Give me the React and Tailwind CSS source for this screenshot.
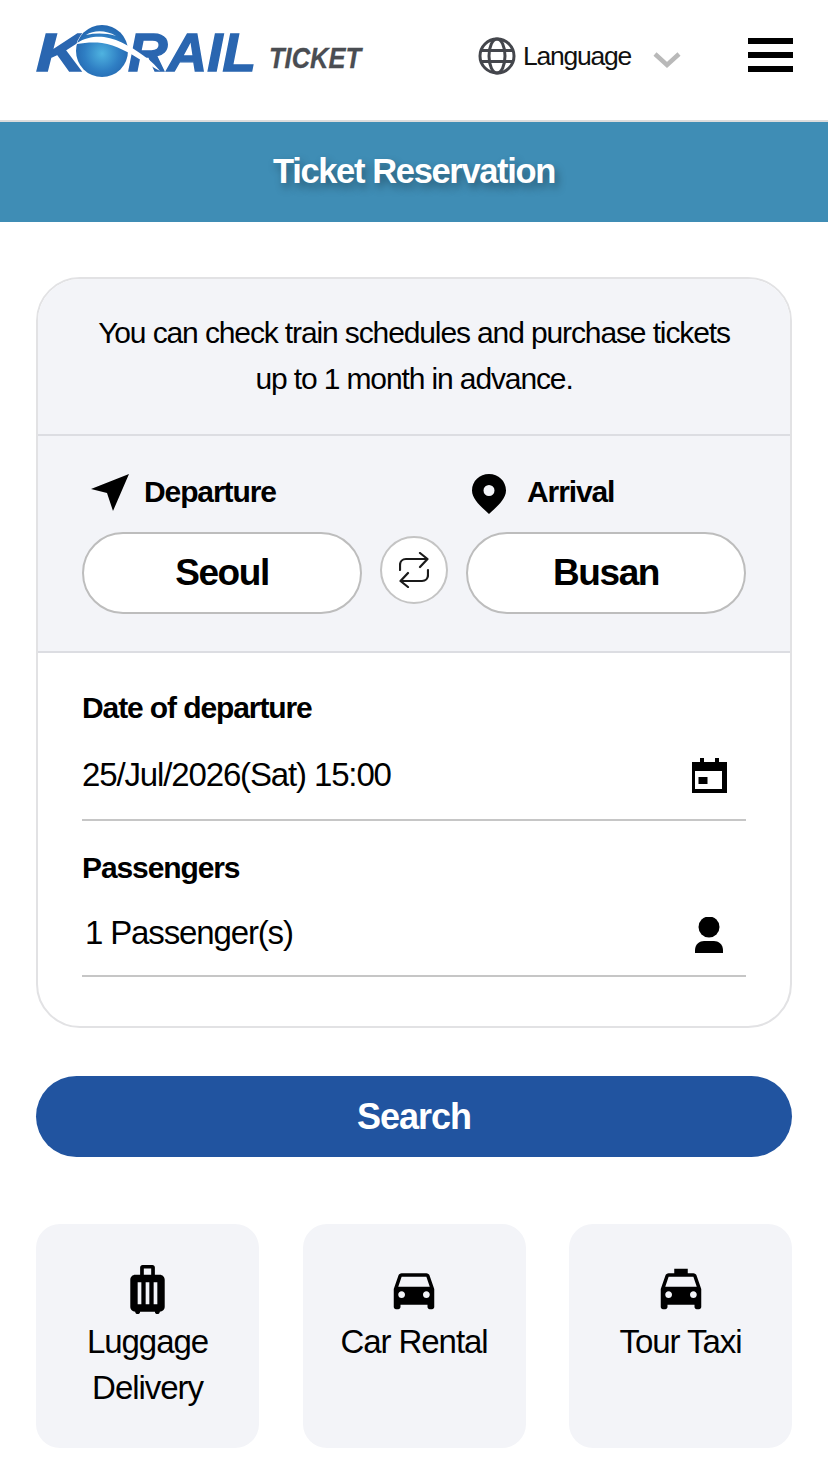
import React from "react";
import { MdLuggage, MdDirectionsCar, MdLocalTaxi } from "react-icons/md";

function Logo() {
  const f = "'Liberation Sans', sans-serif";
  return (
    <svg width="345" height="58" viewBox="0 0 345 58" className="shrink-0">
      <defs>
        <radialGradient id="glb" cx="0.5" cy="0.55" r="0.6">
          <stop offset="0" stopColor="#4fb3e0" />
          <stop offset="0.55" stopColor="#2f7fc4" />
          <stop offset="1" stopColor="#2161ab" />
        </radialGradient>
      </defs>
      <text x="0" y="47" fontFamily={f} fontWeight="700" fontStyle="italic" fontSize="53" fill="#2a66b0" stroke="#2a66b0" strokeWidth="1.4" textLength="50" lengthAdjust="spacingAndGlyphs">K</text>
      <text x="92" y="47" fontFamily={f} fontWeight="700" fontStyle="italic" fontSize="53" fill="#2a66b0" stroke="#2a66b0" strokeWidth="1.4" textLength="128" lengthAdjust="spacingAndGlyphs">RAIL</text>
      <circle cx="66" cy="27" r="26.5" fill="#ffffff" />
      <circle cx="66" cy="27" r="26" fill="url(#glb)" />
      <path d="M41 19 C50 13 60 12 68 13 C84 15 100 26 112 35 C116 38 120 42 124 47 C118 44 114 41 108 38 C94 29 80 21 66 19 C56 18 48 19 41 20 Z" fill="#ffffff" />
      <path d="M50 11 C58 6 70 6 80 12 C70 9 60 9 50 11 Z" fill="#ffffff" />
      <text x="233" y="44" fontFamily={f} fontWeight="700" fontStyle="italic" fontSize="30" fill="#4a4d52" stroke="#4a4d52" strokeWidth="0.3" textLength="92" lengthAdjust="spacingAndGlyphs">TICKET</text>
    </svg>
  );
}

function Globe() {
  return (
    <svg width="38" height="38" viewBox="0 0 38 38" fill="none" stroke="#44464c" strokeWidth="3">
      <circle cx="19" cy="19" r="17" />
      <ellipse cx="19" cy="19" rx="8" ry="17" />
      <path d="M4 13.5h30M4 24.5h30" />
    </svg>
  );
}

function Person() {
  return (
    <svg width="28" height="36" viewBox="0 0 28 36" fill="#000">
      <circle cx="14" cy="10" r="10.5" />
      <path d="M0 36v-3c0-6 5-9 9-9h10c4 0 9 3 9 9v3z" />
    </svg>
  );
}

function CalendarIcon() {
  return (
    <svg width="35" height="35" viewBox="0 0 35 35" fillRule="evenodd" fill="#000">
      <path d="M8 0h4v4h11V0h4v4h8v31H0V4h8zM3 13v18h27V13z" />
      <rect x="6.5" y="19" width="9" height="7" />
    </svg>
  );
}

function SwapIcon() {
  return (
    <svg width="30" height="36" viewBox="0 0 30 36" fill="none" stroke="#1a1a1a" strokeWidth="2.2" strokeLinecap="round" strokeLinejoin="round">
      <path d="M1 18v-5c0-3.5 2.5-6 6-6h21" />
      <path d="M21 1l7.5 6-7.5 8" />
      <path d="M29 18v5c0 3.500-2.500 6-6 6H2" />
      <path d="M9 21l-7.500 8 7.500 6" />
    </svg>
  );
}

function Field({ label, value, icon, vclass }) {
  return (
    <div className="flex flex-col">
      <div className="text-[30px] font-bold leading-[34px] tracking-[-1.1px]">{label}</div>
      <div className="flex items-center justify-between border-b-2 border-[#c6c6c6]">
        <span className={`text-[33px] tracking-[-1.14px] ${vclass}`}>{value}</span>
        {icon}
      </div>
    </div>
  );
}

function Tile({ icon, label }) {
  return (
    <div className="flex h-[224px] flex-col items-center rounded-[24px] bg-[#f3f4f8] pt-[35px] text-center">
      <div className="flex h-[60px] items-center justify-center">{icon}</div>
      <div className="w-full text-[33px] leading-[46px] tracking-[-1.05px]">{label}</div>
    </div>
  );
}

export default function App() {
  return (
    <div className="w-[828px] h-[1469px] overflow-hidden bg-white text-black font-['Liberation_Sans',Arial,sans-serif]">
      <header className="flex h-[122px] items-center border-b-2 border-[#dcdcdc] pl-[36px] pr-[35px]">
        <div className="flex items-center pb-[14px]">
          <Logo />
        </div>
        <div className="ml-[97px] flex items-center pb-[8px]">
          <Globe />
          <span className="ml-[7px] mt-[2px] text-[26.5px] tracking-[-1.25px] text-[#111]">Language</span>
          <svg width="28" height="18" viewBox="0 0 28 18" fill="none" stroke="#b9b9b9" strokeWidth="4.5" className="ml-[22px] mt-[8px]">
            <path d="M2 3l12 11L26 3" />
          </svg>
        </div>
        <div className="ml-auto flex h-[34px] w-[45px] flex-col justify-between mb-[10px]">
          <span className="h-[6px] bg-black" />
          <span className="h-[6px] bg-black" />
          <span className="h-[6px] bg-black" />
        </div>
      </header>

      <div className="flex h-[100px] items-center justify-center bg-[#3f8db5] text-[34.5px] font-bold tracking-[-1.35px] text-white [text-shadow:3px_5px_8px_rgba(0,0,0,0.35)]">
        Ticket Reservation
      </div>

      <main className="px-[36px] pt-[55px]">
        <section className="h-[751px] overflow-hidden rounded-[44px] border-2 border-[#e2e2e4]">
          <div className="flex h-[157px] flex-col justify-center border-b-2 border-[#dcdde2] bg-[#f3f4f8] pb-[1px] text-center text-[30px] leading-[46px] tracking-[-1.12px]">
            <p>You can check train schedules and purchase tickets</p>
            <p>up to 1 month in advance.</p>
          </div>
          <div className="h-[217px] border-b-2 border-[#dcdde2] bg-[#f3f4f8] px-[44px] pt-[33px]">
            <div className="flex h-[44px] items-center text-[30px] font-bold tracking-[-1.1px]">
              <div className="flex w-[388px] items-center">
                <svg width="38" height="38" viewBox="0 0 38 38" className="ml-[9px] mt-[4px]" fill="#000">
                  <path d="M38 0 L0 15 L16 19 L22 37 Z" />
                </svg>
                <span className="ml-[15px]">Departure</span>
              </div>
              <div className="flex items-center">
                <svg width="38" height="42" viewBox="0 0 38 42" className="mt-[6px]" fillRule="evenodd" fill="#000">
                  <path d="M19 1C9.600 1 2 8 2 17.500c0 9 10 17 17 23.500 7-6.500 17-14.500 17-23.500C36 8 28.400 1 19 1zm0 11a5.500 5.500 0 1 1 0 11 5.500 5.500 0 0 1 0-11z" />
                </svg>
                <span className="ml-[19px]">Arrival</span>
              </div>
            </div>
            <div className="mt-[19px] flex items-center justify-between">
              <div className="flex h-[82px] w-[280px] items-center justify-center rounded-full border-2 border-[#bdbdbd] bg-white text-[37px] font-bold tracking-[-1.4px]">Seoul</div>
              <div className="mb-[7px] flex h-[68px] w-[68px] items-center justify-center rounded-full border-2 border-[#c4c4c4] bg-white">
                <SwapIcon />
              </div>
              <div className="flex h-[82px] w-[280px] items-center justify-center rounded-full border-2 border-[#bdbdbd] bg-white text-[37px] font-bold tracking-[-1.4px]">Busan</div>
            </div>
          </div>
          <div className="bg-white px-[44px] pt-[38px]">
            <Field
              label="Date of departure"
              value="25/Jul/2026(Sat) 15:00"
              vclass="pt-[5px] leading-[89px]"
              icon={<span className="mr-[19px] mt-[6px] flex"><CalendarIcon /></span>}
            />
            <div className="mt-[30px]">
              <Field
                label="Passengers"
                value="1 Passenger(s)"
                vclass="pt-[6px] pl-[3px] leading-[84px]"
                icon={<span className="mr-[23px] mt-[9px] flex"><Person /></span>}
              />
            </div>
          </div>
        </section>

        <button className="mt-[48px] flex h-[81px] w-full items-center justify-center rounded-full bg-[#2154a0] text-[36px] font-bold tracking-[-1px] text-white">
          Search
        </button>

        <div className="mt-[67px] grid grid-cols-3 gap-[43.5px]">
          <Tile icon={<MdLuggage size={59} color="#000" />} label={<>Luggage<br />Delivery</>} />
          <Tile icon={<MdDirectionsCar size={54} color="#000" />} label="Car Rental" />
          <Tile icon={<MdLocalTaxi size={54} color="#000" />} label="Tour Taxi" />
        </div>
      </main>
    </div>
  );
}
